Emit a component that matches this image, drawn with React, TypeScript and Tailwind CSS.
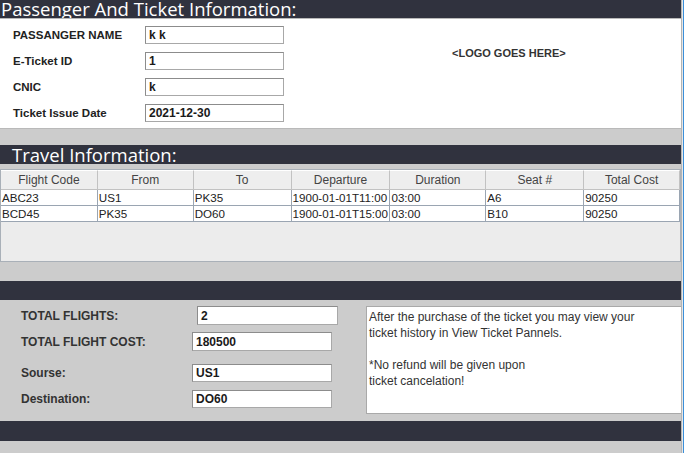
const passenger = [
  { label: "PASSANGER NAME", value: "k k" },
  { label: "E-Ticket ID", value: "1" },
  { label: "CNIC", value: "k" },
  { label: "Ticket Issue Date", value: "2021-12-30" },
];

const columns = ["Flight Code", "From", "To", "Departure", "Duration", "Seat #", "Total Cost"];
const widths = ["w-[97px]", "w-[96px]", "w-[98px]", "w-[99px]", "w-[96px]", "w-[98px]", "w-[96px]"];

const flights = [
  ["ABC23", "US1", "PK35", "1900-01-01T11:00", "03:00", "A6", "90250"],
  ["BCD45", "PK35", "DO60", "1900-01-01T15:00", "03:00", "B10", "90250"],
];

const Field = ({ value, className }: { value: string; className: string }) => (
  <div
    className={`bg-white border border-[#a8a8a8] border-t-[#8c8c8c] border-l-[#8c8c8c] pl-[3px] text-[12px] font-bold text-[#1a1a1a] leading-[16px] flex items-center ${className}`}
  >
    {value}
  </div>
);

const Bar = ({ title, className = "" }: { title?: string; className?: string }) => (
  <div
    className={`bg-[#30323e] text-white text-[18.5px] leading-[18px] whitespace-nowrap ${className}`}
    style={{ fontFamily: '"Open Sans", "Noto Sans", sans-serif' }}
  >
    {title}
  </div>
);

export default function App() {
  return (
    <div
      className="w-[684px] h-[453px] flex bg-[#cccccc] overflow-hidden text-[#333]"
      style={{ fontFamily: '"Liberation Sans", Arial, sans-serif' }}
    >
      <div className="w-[681px] flex flex-col">
        <Bar title="Passenger And Ticket Information:" className="h-[18px] pl-[1px] overflow-hidden" />

        {/* passenger panel */}
        <div className="h-[111px] bg-white border-t border-b border-[#b9b9b9] flex">
          <div className="flex flex-col gap-[8px] pt-[7px]">
            {passenger.map((p) => (
              <div key={p.label} className="flex items-center h-[18px]">
                <span className="w-[145px] pl-[13px] pt-[2px] text-[11.5px] font-bold text-[#222]">{p.label}</span>
                <Field value={p.value} className="w-[139px] h-[18px]" />
              </div>
            ))}
          </div>
          <div className="pl-[168px] pt-[26px] text-[11px] font-bold text-[#333] whitespace-nowrap">
            &lt;LOGO GOES HERE&gt;
          </div>
        </div>

        <div className="h-[16px]" />
        <Bar title="Travel Information:" className="h-[19px] pl-[12px] leading-[20px] overflow-hidden" />
        <div className="h-[5px]" />

        {/* flights table */}
        <div className="h-[93px] bg-[#ececec] border border-[#a9b0b8] flex flex-col">
          <div className="flex h-[20px]">
            {columns.map((c, i) => (
              <div
                key={c}
                className={`${widths[i]} bg-[#eeeeee] border-r border-b border-[#c2c2c2] border-t border-t-white text-center text-[12px] text-[#444] leading-[19px]`}
              >
                {c}
              </div>
            ))}
          </div>
          {flights.map((row, r) => (
            <div key={r} className="flex h-[16px]">
              {row.map((cell, i) => (
                <div
                  key={i}
                  className={`${widths[i]} bg-white border-r border-b border-[#9aa5b2] pl-[1px] text-[11.6px] text-[#222] leading-[15px] whitespace-nowrap overflow-hidden`}
                >
                  {cell}
                </div>
              ))}
            </div>
          ))}
        </div>

        <div className="h-[19px]" />
        <Bar className="h-[19px]" />

        {/* totals panel */}
        <div className="h-[121px] flex">
          <div className="w-[366px] flex flex-col pt-[6px] text-[12px] font-bold text-[#333]">
            <div className="flex items-center h-[19px]">
              <span className="w-[197px] pl-[21px]">TOTAL FLIGHTS:</span>
              <Field value="2" className="w-[141px] h-[19px]" />
            </div>
            <div className="flex items-center h-[19px] mt-[7px]">
              <span className="w-[192px] pl-[21px]">TOTAL FLIGHT COST:</span>
              <Field value="180500" className="w-[140px] h-[19px]" />
            </div>
            <div className="flex items-center h-[18px] mt-[13px]">
              <span className="w-[192px] pl-[21px]">Sourse:</span>
              <Field value="US1" className="w-[140px] h-[18px]" />
            </div>
            <div className="flex items-center h-[18px] mt-[8px]">
              <span className="w-[192px] pl-[21px]">Destination:</span>
              <Field value="DO60" className="w-[140px] h-[18px]" />
            </div>
          </div>
          <div className="flex-1 mt-[6px] h-[108px] bg-white border border-[#a9a9a9] border-r-0 pt-[2px] pl-[2px] text-[12px] leading-[16px] text-[#333]">
            <div>After the purchase of the ticket you may view your</div>
            <div>ticket history in View Ticket Pannels.</div>
            <div className="h-[16px]" />
            <div>*No refund will be given upon</div>
            <div>ticket cancelation!</div>
          </div>
        </div>

        <Bar className="h-[20px]" />
        <div className="flex-1" />
      </div>
      <div className="w-[1px] bg-[#b5b5b5]" />
      <div className="w-[1px] bg-[#e6e6e6]" />
      <div className="w-[1px] bg-[#3b8fd9]" />
    </div>
  );
}
